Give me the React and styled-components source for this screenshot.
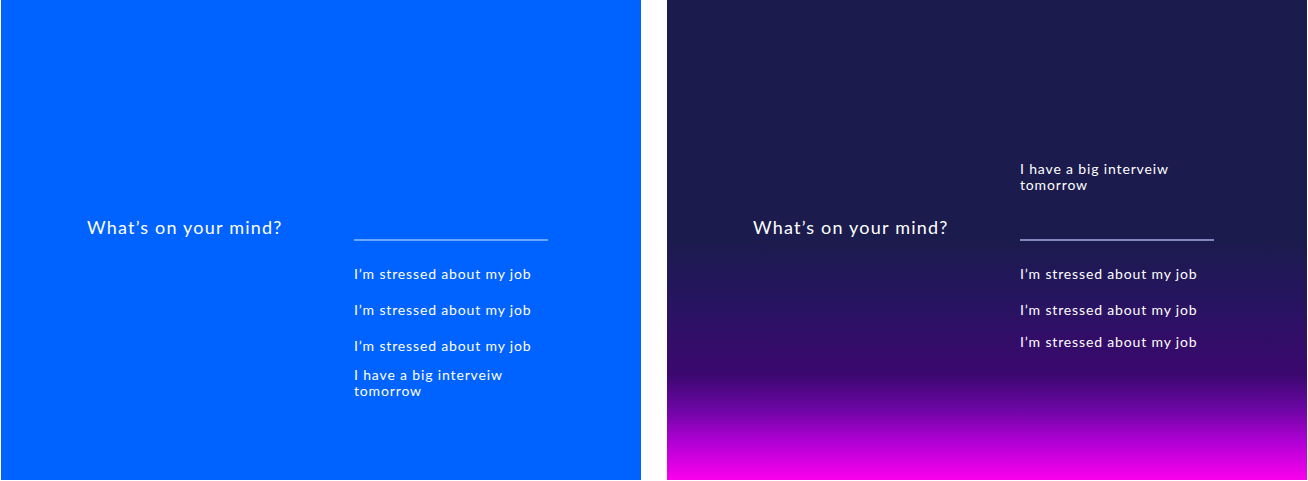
import React from 'react'
import styled, { createGlobalStyle } from 'styled-components'

const GlobalStyle = createGlobalStyle`
  html, body {
    margin: 0;
    padding: 0;
    background: #ffffff;
  }
  body {
    font-family: Lato, "Noto Sans", sans-serif;
  }
`

const Page = styled.div`
  display: flex;
  gap: 26px;
  padding-left: 1px;
  width: 1308px;
  height: 481px;
  box-sizing: border-box;
`

const Panel = styled.div`
  width: 640px;
  height: 480px;
  flex-shrink: 0;
  display: flex;
  align-items: flex-start;
  padding-left: 86px;
  box-sizing: border-box;
  background: ${p => p.dark
    ? 'linear-gradient(180deg, #1b1b4d 0%, #1b1b4d 50%, #261560 62%, #330d68 71%, #3b0870 78%, #6a06a2 85%, #b000d4 92%, #fb00ec 100%)'
    : '#0062ff'};
`

const Question = styled.div`
  width: 267px;
  margin-top: 216px;
  font-size: 18px;
  line-height: 22px;
  letter-spacing: 1.2px;
  color: #ffffff;
`

const Column = styled.div`
  width: 194px;
  display: flex;
  flex-direction: column;
  padding-top: ${p => p.top}px;
`

const Input = styled.div`
  height: ${p => p.h}px;
  border-bottom: 2px solid ${p => p.line};
`

const Option = styled.div`
  margin-top: ${p => p.space}px;
  font-size: 14px;
  line-height: 16px;
  letter-spacing: 0.85px;
  color: #ffffff;
`

const Chosen = styled(Option)`
  margin-top: 0;
`

const stressed = "I’m stressed about my job"
const interview = 'I have a big interveiw tomorrow'

function MindPanel({ dark, top, inputHeight, line, chosen, items }) {
  return (
    <Panel dark={dark}>
      <Question>What’s on your mind?</Question>
      <Column top={top}>
        {chosen && <Chosen>{chosen}</Chosen>}
        <Input h={inputHeight} line={line} />
        {items.map((item, i) => (
          <Option key={i} space={item.space}>{item.text}</Option>
        ))}
      </Column>
    </Panel>
  )
}

export default function App() {
  return (
    <>
      <GlobalStyle />
      <Page>
        <MindPanel
          top={200}
          inputHeight={39}
          line="#6aa6ff"
          items={[
            { text: stressed, space: 25 },
            { text: stressed, space: 20 },
            { text: stressed, space: 20 },
            { text: interview, space: 13 },
          ]}
        />
        <MindPanel
          dark
          top={161}
          inputHeight={46}
          line="#8585bd"
          chosen={interview}
          items={[
            { text: stressed, space: 25 },
            { text: stressed, space: 20 },
            { text: stressed, space: 16 },
          ]}
        />
      </Page>
    </>
  )
}
